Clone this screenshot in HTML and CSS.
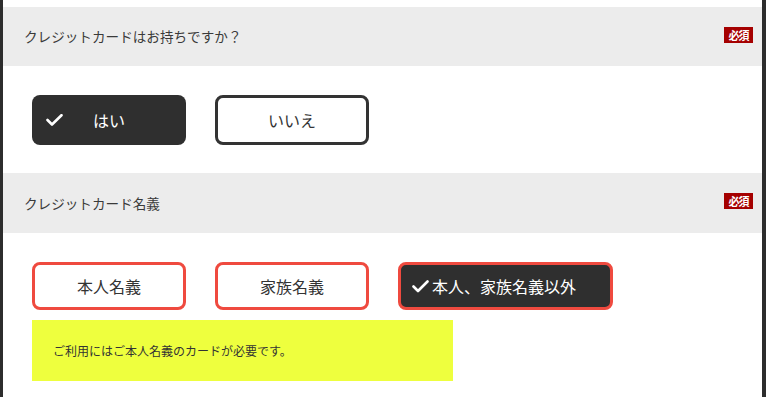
FILE: index.html
```html
<!DOCTYPE html>
<html lang="ja">
<head>
<meta charset="utf-8">
<title>クレジットカード</title>
<link rel="stylesheet" href="styles.css">
</head>
<body>
<div class="frame">
  <div class="q-head">
    <span class="q-title">クレジットカードはお持ちですか？</span>
    <span class="badge">必須</span>
  </div>
  <div class="q-body q-body-1">
    <div class="choices">
      <div class="choice choice-dark choice-grid">
        <svg class="check" width="17" height="12" viewBox="0 0 17 12"><polyline points="1.5,6 6,10.5 15.5,1.2" fill="none" stroke="#fff" stroke-width="2.6" stroke-linecap="round" stroke-linejoin="round"/></svg>
        <span class="choice-label">はい</span>
        <span></span>
      </div>
      <div class="choice choice-outline">いいえ</div>
    </div>
  </div>
  <div class="q-head q-head-2">
    <span class="q-title">クレジットカード名義</span>
    <span class="badge">必須</span>
  </div>
  <div class="q-body q-body-2">
    <div class="choices">
      <div class="choice choice-red">本人名義</div>
      <div class="choice choice-red">家族名義</div>
      <div class="choice choice-red choice-red-dark choice-wide">
        <svg class="check" width="17" height="13" viewBox="0 0 17 13"><polyline points="1.5,6.5 6,11 15.5,1.5" fill="none" stroke="#fff" stroke-width="2.6" stroke-linecap="round" stroke-linejoin="round"/></svg>
        <span>本人、家族名義以外</span>
      </div>
    </div>
    <div class="notice">ご利用にはご本人名義のカードが必要です。</div>
  </div>
</div>
</body>
</html>
```
FILE: styles.css
```css
html, body {
  margin: 0;
  padding: 0;
  background: #ffffff;
}
body {
  font-family: "Noto Sans CJK JP", "Noto Sans", sans-serif;
  color: #333333;
  width: 768px;
  height: 397px;
  overflow: hidden;
}
.frame {
  width: 759px;
  height: 397px;
  border-left: 3px solid #2d2d2d;
  border-right: 4px solid #2d2d2d;
  padding-top: 7px;
  box-sizing: content-box;
}
.q-head {
  height: 59px;
  background: #ececec;
  display: flex;
  align-items: center;
  justify-content: space-between;
  padding: 0 9px 0 21px;
}
.q-head-2 {
  height: 60px;
}
.q-title {
  font-size: 13.6px;
  color: #3a3a3a;
  letter-spacing: 0;
  margin-top: -1px;
}
.badge {
  width: 29px;
  height: 16px;
  background: #a50000;
  color: #ffffff;
  font-size: 11px;
  font-weight: bold;
  line-height: 16px;
  text-align: center;
  margin-bottom: 4px;
  letter-spacing: -1px;
}
.q-body {
  padding-left: 29px;
}
.q-body-1 {
  height: 107px;
  padding-top: 29px;
  box-sizing: border-box;
}
.q-body-2 {
  padding-top: 29px;
}
.choices {
  display: flex;
  gap: 29px;
}
.choice {
  width: 154px;
  height: 50px;
  box-sizing: border-box;
  border-radius: 8px;
  display: flex;
  align-items: center;
  justify-content: center;
  font-size: 16px;
}
.choice-dark {
  background: #2f2f2f;
  color: #ffffff;
}
.choice-grid {
  display: grid;
  grid-template-columns: 17px 1fr 17px;
  padding: 0 14px;
}
.choice-label {
  text-align: center;
}
.choice-outline {
  border: 3px solid #333333;
  background: #ffffff;
}
.choice-red {
  height: 48px;
  border: 3px solid #ef4a3f;
  background: #ffffff;
}
.choice-red-dark {
  background: #2f2f2f;
  color: #ffffff;
}
.choice-wide {
  width: 215px;
  justify-content: flex-start;
  padding-left: 11px;
  gap: 3px;
}
.notice {
  margin-top: 10px;
  width: 421px;
  height: 61px;
  background: #eeff3e;
  font-size: 12px;
  color: #333333;
  display: flex;
  align-items: center;
  padding-left: 21px;
  box-sizing: border-box;
}
```
